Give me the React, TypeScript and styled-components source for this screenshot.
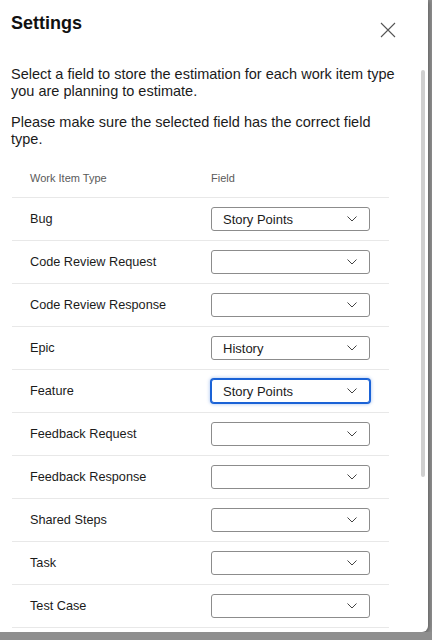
import React, { useState } from 'react';
import styled, { createGlobalStyle } from 'styled-components';

const GlobalStyle = createGlobalStyle`
  html, body {
    margin: 0;
    padding: 0;
    background: #8e8e8e;
    font-family: "Liberation Sans", Arial, Helvetica, sans-serif;
    color: #1b1b1b;
  }
`;

const Panel = styled.div`
  position: relative;
  width: 428px;
  height: 632px;
  background: #ffffff;
  border-bottom-right-radius: 6px;
  box-shadow: 1px 1px 4px rgba(0, 0, 0, 0.35);
  overflow: hidden;
  box-sizing: border-box;
  padding: 12px 0 0 11px;
`;

const Header = styled.div`
  display: flex;
  align-items: flex-start;
  justify-content: space-between;
  padding-right: 32px;
`;

const Title = styled.h1`
  margin: 0;
  font-size: 18px;
  line-height: 22px;
  font-weight: 700;
  color: #111;
`;

const CloseButton = styled.button`
  border: none;
  background: none;
  padding: 0;
  margin-top: 10px;
  width: 16px;
  height: 16px;
  display: flex;
  cursor: pointer;
`;

const Paragraph = styled.p<{ $top: number }>`
  margin: ${p => p.$top}px 0 0 0;
  width: 392px;
  font-size: 14.5px;
  line-height: 17px;
  color: #1b1b1b;
`;

const Table = styled.div`
  margin-top: 24px;
  width: 377px;
  margin-left: 1px;
`;

const HeadRow = styled.div`
  display: grid;
  grid-template-columns: 181px 1fr;
  height: 25px;
  align-items: start;
  border-bottom: 1px solid #e8e8e8;
  font-size: 11px;
  color: #5a5a5a;
  padding-left: 18px;
`;

const Row = styled.div`
  display: grid;
  grid-template-columns: 181px 159px;
  height: 42px;
  align-items: center;
  border-bottom: 1px solid #e8e8e8;
  padding-left: 18px;
  font-size: 12.7px;
  color: #1b1b1b;
`;

const Select = styled.div<{ $focused?: boolean }>`
  position: relative;
  height: 24px;
  box-sizing: border-box;
  border: 1px solid ${p => (p.$focused ? '#1a62d6' : '#8c8c8c')};
  border-radius: 3px;
  box-shadow: ${p => (p.$focused ? '0 0 0 1px #1a62d6, 0 0 3px 2px rgba(26, 98, 214, 0.25)' : 'none')};
  display: flex;
  align-items: center;
  justify-content: space-between;
  padding: 0 12px 0 11px;
  font-size: 13px;
  color: #1b1b1b;
  background: #fff;
`;

const Scrollbar = styled.div`
  position: absolute;
  right: 3px;
  top: 70px;
  width: 4px;
  height: 407px;
  border-radius: 2px;
  background: #cfcfcf;
`;

const Chevron = () => (
  <svg width="10" height="6" viewBox="0 0 10 6" fill="none">
    <path d="M0.5 0.5 L5 5 L9.5 0.5" stroke="#444" strokeWidth="1" />
  </svg>
);

const rows: { name: string; value: string; focused?: boolean }[] = [
  { name: 'Bug', value: 'Story Points' },
  { name: 'Code Review Request', value: '' },
  { name: 'Code Review Response', value: '' },
  { name: 'Epic', value: 'History' },
  { name: 'Feature', value: 'Story Points', focused: true },
  { name: 'Feedback Request', value: '' },
  { name: 'Feedback Response', value: '' },
  { name: 'Shared Steps', value: '' },
  { name: 'Task', value: '' },
  { name: 'Test Case', value: '' },
];

export default function App() {
  const [items] = useState(rows);
  return (
    <>
      <GlobalStyle />
      <Panel>
        <Header>
          <Title>Settings</Title>
          <CloseButton aria-label="Close">
            <svg width="16" height="16" viewBox="0 0 16 16">
              <path d="M1 1 L15 15 M15 1 L1 15" stroke="#555" strokeWidth="1.1" />
            </svg>
          </CloseButton>
        </Header>
        <Paragraph $top={28}>
          Select a field to store the estimation for each work item type you are planning to estimate.
        </Paragraph>
        <Paragraph $top={14}>
          Please make sure the selected field has the correct field type.
        </Paragraph>
        <Table>
          <HeadRow>
            <span>Work Item Type</span>
            <span>Field</span>
          </HeadRow>
          {items.map(r => (
            <Row key={r.name}>
              <span>{r.name}</span>
              <Select $focused={r.focused}>
                <span>{r.value}</span>
                <Chevron />
              </Select>
            </Row>
          ))}
        </Table>
        <Scrollbar />
      </Panel>
    </>
  );
}
